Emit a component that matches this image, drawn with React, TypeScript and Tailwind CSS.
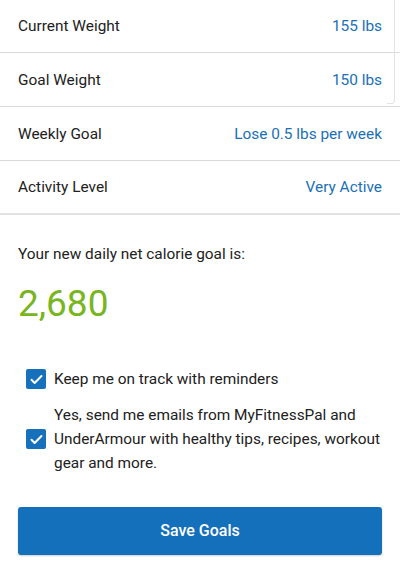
import { useState } from "react";

const rows = [
    { label: "Current Weight", value: "155 lbs" },
    { label: "Goal Weight", value: "150 lbs" },
    { label: "Weekly Goal", value: "Lose 0.5 lbs per week" },
    { label: "Activity Level", value: "Very Active" },
];

const CheckBox = ({ checked, onClick }: { checked: boolean; onClick: () => void }) => (
    <button
        onClick={onClick}
        className={`w-[20px] h-[20px] shrink-0 rounded-[2px] flex items-center justify-center ${checked ? "bg-[#1670bb]" : "border-2 border-gray-500 bg-white"}`}
    >
        {checked && (
            <svg width="15" height="15" viewBox="0 0 24 24" fill="none" stroke="white" strokeWidth="3.2" strokeLinecap="round" strokeLinejoin="round">
                <path d="M4 12.5l5 5L20 6.5" />
            </svg>
        )}
    </button>
);

export default function App() {
    const [reminders, setReminders] = useState<boolean>(true);
    const [emails, setEmails] = useState<boolean>(true);

    return (
        <div className="relative w-[400px] h-[578px] bg-white overflow-hidden text-[#212121] font-['Roboto','Liberation_Sans',sans-serif]">
            {/* faint edge of the card above */}
            <div className="absolute right-[5px] top-0 w-[8px] h-[104px] border-r border-b border-[#e3e3e3] rounded-br-[4px]" />

            <div className="flex flex-col">
                {rows.map((row, index) => (
                    <div
                        key={index}
                        className={`flex items-center justify-between px-[18px] pt-[2px] text-[15.4px] ${index === 0 ? "h-[53px]" : "h-[54px]"} ${index === rows.length - 1 ? "border-b-2 border-[#e2e2e2]" : "border-b border-[#dadada]"}`}
                    >
                        <span>{row.label}</span>
                        <span className="text-[#1a70b6]">{row.value}</span>
                    </div>
                ))}
            </div>

            <div className="px-[18px] pt-[26px]">
                <p className="text-[15.4px] leading-[26px]">Your new daily net calorie goal is:</p>
                <p className="mt-[14px] text-[37px] leading-[46px] text-[#78b51e]">2,680</p>
            </div>

            <div className="flex flex-col gap-[12px] pl-[26px] pr-[12px] pt-[40px]">
                <div className="flex items-center gap-[8px]">
                    <CheckBox checked={reminders} onClick={() => setReminders((prev) => !prev)} />
                    <span className="text-[15.4px] leading-[24px]">Keep me on track with reminders</span>
                </div>
                <div className="flex items-center gap-[8px]">
                    <CheckBox checked={emails} onClick={() => setEmails((prev) => !prev)} />
                    <span className="text-[15.4px] leading-[24px]">
                        Yes, send me emails from MyFitnessPal and UnderArmour with healthy tips, recipes, workout gear and more.
                    </span>
                </div>
            </div>

            <div className="px-[18px] pt-[32px]">
                <button className="w-full h-[48px] rounded-[3px] bg-[#1570bb] text-white text-[16px] font-medium shadow-[0_1px_2px_rgba(0,0,0,0.2)]">
                    Save Goals
                </button>
            </div>
        </div>
    );
}
